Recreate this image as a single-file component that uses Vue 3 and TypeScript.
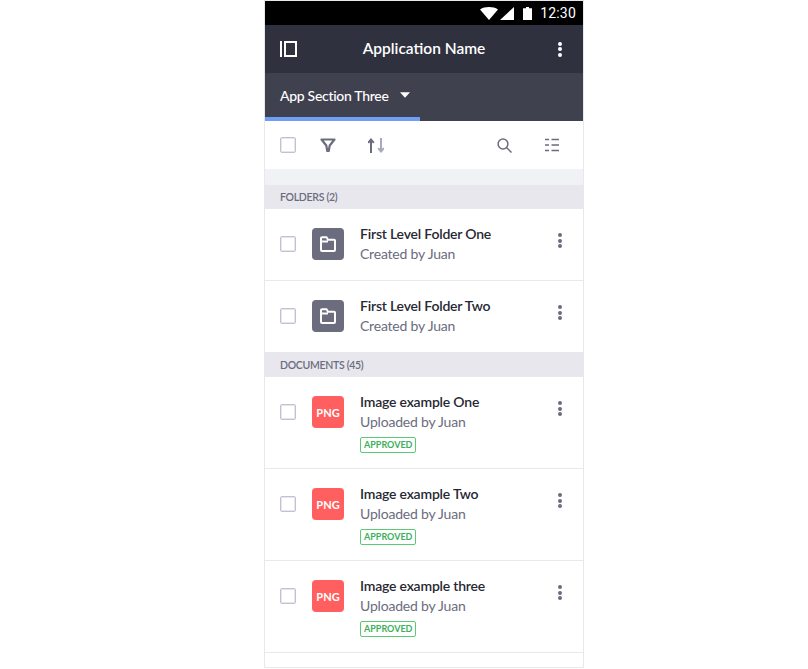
<template>
  <div class="page">
    <div class="phone">
      <div class="status-bar">
        <svg width="18" height="13" viewBox="0 0 18 13"><path d="M0 2.400C2.500.8 5.600 0 9 0s6.500.8 9 2.400L9 13z" fill="#fff" /></svg>
        <svg class="signal" width="14" height="13" viewBox="0 0 14 13"><path d="M0 13 14 0v13z" fill="#fff" /></svg>
        <svg class="battery" width="9" height="13" viewBox="0 0 9 13"><path d="M3 0h3v1.300h3V13H0V1.300h3z" fill="#fff" /></svg>
        <span class="clock">12:30</span>
      </div>

      <header class="app-bar">
        <svg width="17" height="16" viewBox="0 0 17 16" fill="none" stroke="#fff" stroke-width="2">
          <path d="M1 0v16" />
          <rect x="5" y="1" width="11" height="14" />
        </svg>
        <span class="app-title">Application Name</span>
        <span class="kebab light"><i></i><i></i><i></i></span>
      </header>

      <div class="section-bar">
        <div class="tab">
          <span>App Section Three</span>
          <svg width="10" height="6" viewBox="0 0 10 6"><path d="M0 .3h10L5 5.800z" fill="#fff" /></svg>
        </div>
      </div>

      <div class="toolbar">
        <span class="check"></span>
        <svg class="filter" width="16" height="15" viewBox="0 0 16 15" fill="none" stroke="#6b6c7e" stroke-width="2.200" stroke-linejoin="round">
          <path d="M1.500 1.500h13L9.700 7.500l-1 5.500h-1.400l-1-5.500z" />
        </svg>
        <svg class="sort" width="16" height="15" viewBox="0 0 16 15" fill="none" stroke-width="2">
          <path d="M3 15V2M.2 4.800 3 1.500l2.800 3.300" stroke="#6b6c7e" />
          <path d="M13 0v13M10.200 10.200 13 13.500l2.800-3.300" stroke="#a7a9bc" />
        </svg>
        <span class="spacer"></span>
        <svg class="search" width="15" height="15" viewBox="0 0 15 15" fill="none" stroke="#6b6c7e" stroke-width="1.500">
          <circle cx="6" cy="6" r="4.900" />
          <path d="m9.500 9.500 5 5" />
        </svg>
        <svg class="list" width="14" height="14" viewBox="0 0 14 14" fill="none" stroke="#6b6c7e" stroke-width="1.600">
          <path d="M0 1.500h4M6.500 1.500H14M0 7h4M6.500 7H14M0 12.500h4M6.500 12.500H14" />
        </svg>
      </div>

      <div class="group-gap"></div>

      <div class="group-title">FOLDERS (2)</div>
      <div v-for="f in folders" :key="f" class="row">
        <span class="check"></span>
        <span class="thumb folder">
          <svg width="16" height="16" viewBox="0 0 16 16" fill="none" stroke="#fff" stroke-width="2">
            <path d="M1 6V2.200a1 1 0 0 1 1-1h4.500l1.500 2.500h6a1 1 0 0 1 1 1V14a1 1 0 0 1-1 1H2a1 1 0 0 1-1-1V5.500h7" />
          </svg>
        </span>
        <div class="info">
          <div class="name">{{ f }}</div>
          <div class="sub">Created by Juan</div>
        </div>
        <span class="kebab"><i></i><i></i><i></i></span>
      </div>

      <div class="group-title">DOCUMENTS (45)</div>
      <div v-for="d in documents" :key="d" class="row doc">
        <span class="check"></span>
        <span class="thumb png">PNG</span>
        <div class="info">
          <div class="name">{{ d }}</div>
          <div class="sub">Uploaded by Juan</div>
          <span class="badge">APPROVED</span>
        </div>
        <span class="kebab"><i></i><i></i><i></i></span>
      </div>
    </div>
  </div>
</template>

<script setup lang="ts">
const folders: string[] = ['First Level Folder One', 'First Level Folder Two']
const documents: string[] = ['Image example One', 'Image example Two', 'Image example three']
</script>

<style>
html,
body {
  margin: 0;
  background: #fff;
}
</style>

<style scoped>
.page {
  height: 669px;
  padding-left: 264px;
  box-sizing: border-box;
  overflow: hidden;
  font-family: Lato, "Noto Sans", sans-serif;
}

.phone {
  width: 320px;
  height: 668px;
  box-sizing: border-box;
  background: #fff;
  border: 1px solid #e7e7ed;
  overflow: hidden;
}

.status-bar {
  height: 24px;
  background: #000;
  display: flex;
  align-items: center;
  justify-content: flex-end;
  padding-right: 7px;
  color: #fff;
}

.status-bar svg {
  margin-top: 1px;
}

.signal {
  margin-left: 2px;
}

.battery {
  margin-left: 9px;
}

.clock {
  font-family: Roboto, sans-serif;
  font-size: 14px;
  margin-left: 8px;
  letter-spacing: 0.2px;
}

.app-bar {
  height: 48px;
  background: #30313f;
  display: flex;
  align-items: center;
  padding: 0 21px 0 15px;
}

.app-title {
  flex: 1;
  margin-top: -2px;
  text-align: center;
  color: #fff;
  font-size: 15.500px;
  font-weight: 600;
}

.kebab {
  display: flex;
  flex-direction: column;
  gap: 1.500px;
  width: 4px;
}

.kebab i {
  display: block;
  width: 4px;
  height: 4px;
  border-radius: 50%;
  background: #6b6c7e;
}

.kebab.light {
  width: 11px;
  align-items: flex-end;
}

.kebab.light i {
  background: #fff;
}

.section-bar {
  height: 48px;
  background: #40414f;
}

.tab {
  width: 155px;
  height: 48px;
  box-sizing: border-box;
  border-bottom: 4px solid #6e9ef5;
  padding-left: 15px;
  display: flex;
  align-items: center;
  gap: 11px;
  color: #fff;
  font-size: 14px;
  letter-spacing: -0.3px;
  font-weight: 500;
  white-space: nowrap;
}

.toolbar {
  height: 48px;
  display: flex;
  align-items: center;
  padding: 0 24px 0 15px;
}

.check {
  flex: none;
  width: 14px;
  height: 14px;
  border: 1px solid #c0c2d2;
  border-radius: 2px;
  box-shadow: inset 0 0 0 1px #e7e7ed;
}

.filter {
  margin-left: 24px;
}

.sort {
  margin-left: 32px;
}

.spacer {
  flex: 1;
}

.list {
  margin-left: 33px;
}

.group-gap {
  height: 16px;
  background: #f1f2f5;
}

.group-title {
  height: 24px;
  background: #e7e7ed;
  padding-left: 15px;
  font-size: 10.500px;
  letter-spacing: -0.3px;
  font-weight: 600;
  line-height: 24px;
  color: #6b6c7e;
}

.row {
  height: 72px;
  box-sizing: border-box;
  border-bottom: 1px solid #e7e7ed;
  display: flex;
  align-items: flex-start;
  padding: 19px 21px 0 15px;
}

.row.doc {
  height: 92px;
}

.row .check {
  margin-top: 8px;
}

.thumb {
  flex: none;
  width: 32px;
  height: 32px;
  margin-left: 16px;
  border-radius: 4px;
  display: flex;
  align-items: center;
  justify-content: center;
}

.folder {
  background: #6b6c7e;
}

.png {
  background: #ff5f5f;
  color: #fff;
  font-size: 11px;
  font-weight: 700;
}

.info {
  flex: 1;
  margin-left: 16px;
  margin-top: -4px;
}

.name {
  font-size: 14px;
  letter-spacing: -0.2px;
  font-weight: 600;
  line-height: 20px;
  color: #272833;
}

.sub {
  font-size: 14px;
  letter-spacing: -0.2px;
  line-height: 20px;
  color: #6b6c7e;
}

.badge {
  display: inline-block;
  height: 14px;
  margin-top: 4px;
  padding: 0 3px;
  border: 1px solid #5aca75;
  border-radius: 2px;
  font-size: 9px;
  font-weight: 700;
  line-height: 14px;
  color: #3ab05a;
}

.row .kebab {
  margin-top: 5px;
}
</style>
